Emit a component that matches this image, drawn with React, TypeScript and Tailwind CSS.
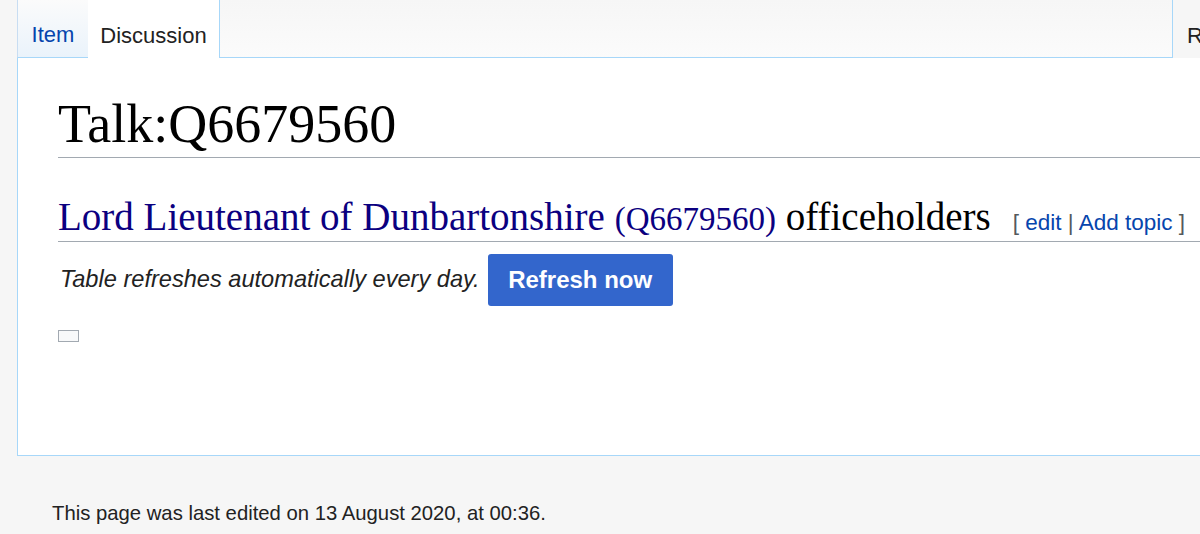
import React from "react";

export default function App() {
  const sans = { fontFamily: '"Liberation Sans", Arial, sans-serif' };
  const serif = { fontFamily: '"Liberation Serif", "DejaVu Serif", serif' };
  return (
    <div className="w-[1200px] h-[534px] bg-[#f6f6f6] overflow-hidden relative" style={sans}>
      {/* tab bar */}
      <div className="flex h-[58px] pl-[17px] w-[1400px]">
        <div className="w-[71px] h-[58px] border-l border-l-[#c8ddf2] border-b border-b-[#a7d7f9] bg-gradient-to-b from-[#fbfbfb] to-[#eaf3fb] flex items-end justify-center pb-[11px]">
          <span className="text-[22px] leading-none text-[#0645ad]">Item</span>
        </div>
        <div className="w-[132px] h-[58px] bg-white border-r border-r-[#a7d7f9] flex items-end justify-center pb-[11px]">
          <span className="text-[22px] leading-none text-[#222]">Discussion</span>
        </div>
        <div className="w-[952px] h-[58px] border-b border-b-[#a7d7f9] bg-gradient-to-b from-[#f6f6f6] to-[#fbfbfb]" />
        <div className="h-[58px] border-l border-l-[#a7d7f9] pl-[14px] flex items-end pb-[11px]">
          <span className="text-[22px] leading-none text-[#222]">Read</span>
        </div>
      </div>

      {/* content */}
      <div className="ml-[17px] w-[1300px] h-[398px] bg-white border-l border-b border-[#a7d7f9] pl-[40px] pt-[37px]">
        <h1
          className="text-[54px] leading-[58px] text-black border-b border-[#a2a9b1] pb-[4px]"
          style={serif}
        >
          Talk:Q6679560
        </h1>
        <div className="mt-[39px] flex items-end border-b border-[#a2a9b1] pb-[2px]">
          <h2 className="text-[39px] leading-[40px] text-black" style={serif}>
            <span className="text-[#0b0080]">Lord Lieutenant of Dunbartonshire</span>{" "}
            <span className="text-[#0b0080] text-[33px]">(Q6679560)</span> officeholders
          </h2>
          <span className="ml-[22px] mb-[5px] text-[22.5px] leading-none text-[#54595d]">
            [ <span className="text-[#0645ad]">edit</span> | <span className="text-[#0645ad]">Add topic</span> ]
          </span>
        </div>
        <div className="mt-[12px] flex items-center">
          <span className="italic text-[23.6px] text-[#222] ml-[2px]">Table refreshes automatically every day.</span>
          <button className="ml-[8px] w-[185px] h-[52px] bg-[#3366cc] rounded-[3px] text-white font-bold text-[24px]">
            Refresh now
          </button>
        </div>
        <div className="mt-[24px] w-[21px] h-[12px] border border-[#a2a9b1] bg-[#f8f9fa]" />
      </div>

      <div className="pl-[52px] pt-[47px] text-[20.3px] text-[#222] leading-none">
        This page was last edited on 13 August 2020, at 00:36.
      </div>
    </div>
  );
}
